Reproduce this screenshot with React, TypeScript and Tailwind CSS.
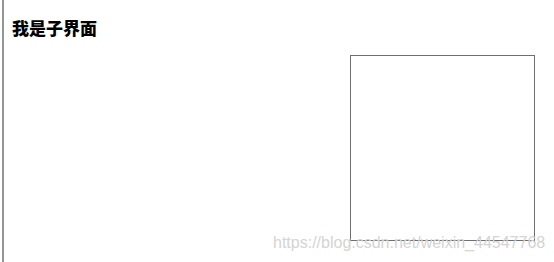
export default function App() {
  return (
    <div className="relative h-[262px] w-[554px] bg-white overflow-hidden" style={{ fontFamily: '"Liberation Sans", "Noto Sans CJK SC", sans-serif' }}>
      <div className="ml-[2px] h-full border-l-2 border-[#959595] pl-[8px] pr-[19px] pt-[20px] flex flex-col">
        <h3 className="text-[17px] leading-[20px] font-black text-black">我是子界面</h3>
        <div className="mt-[15px] self-end w-[185px] h-[186px] border border-[#6f6f6f]" />
      </div>

      {/* watermark */}
      <div className="absolute left-[273px] top-[234px] text-[16px] leading-[18px] text-[#d4d4d4] whitespace-nowrap pointer-events-none">
        https://blog.csdn.net/weixin_44547768
      </div>
    </div>
  );
}
